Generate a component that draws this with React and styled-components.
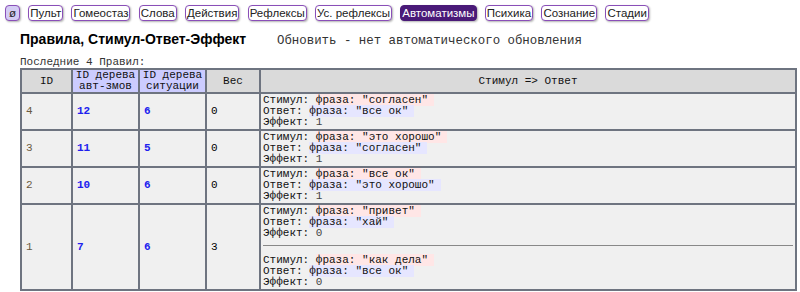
import React from "react";
import styled, { createGlobalStyle } from "styled-components";

const Global = createGlobalStyle`
  html, body { margin: 0; padding: 0; background: #fff; }
  body { font-family: "Liberation Sans", Arial, sans-serif; color: #000; }
`;

const Page = styled.div`
  padding: 4px 3px 0 5px;
`;

const Nav = styled.nav`
  display: flex;
  align-items: center;
  gap: 8.3px;
  height: 17px;
`;

const NavButton = styled.span`
  display: inline-block;
  font-family: "Liberation Sans", Arial, sans-serif;
  font-size: 11.5px;
  line-height: 14px;
  padding: ${(p) => (p.$light ? "0 3px" : "0 1px")};
  border: 1px solid ${(p) => (p.$active ? "#4a1a78" : "#8a4fb8")};
  border-radius: 4px;
  background: ${(p) => (p.$active ? "#4a1a78" : p.$light ? "#d4ccf4" : "#fff")};
  color: ${(p) => (p.$active ? "#fff" : "#222")};
  box-shadow: 1px 1px 2px rgba(0, 0, 0, 0.3);
`;

const Main = styled.div`
  padding-left: 15px;
`;

const TitleRow = styled.div`
  display: flex;
  align-items: baseline;
  margin-top: 10px;
  height: 22px;
`;

const Title = styled.h1`
  margin: 0;
  font-size: 14px;
  font-weight: bold;
  font-family: "Liberation Sans", Arial, sans-serif;
  width: 257px;
`;

const Refresh = styled.span`
  font-family: "Liberation Mono", "Courier New", monospace;
  font-size: 12.4px;
  color: #333;
`;

const Caption = styled.div`
  font-family: "Liberation Mono", "Courier New", monospace;
  font-size: 11px;
  line-height: 12px;
  color: #333;
  margin-top: 3px;
`;

const Table = styled.table`
  border-collapse: separate;
  border-spacing: 0;
  border: 1px solid #6e7480;
  width: 777px;
  font-family: "Liberation Mono", "Courier New", monospace;
  font-size: 11px;
  line-height: 11px;
`;

const Th = styled.th`
  border: 1px solid #6e7480;
  background: ${(p) => (p.$tree ? "#ccccff" : "#dadada")};
  color: #111;
  font-weight: normal;
  text-align: center;
  padding: 0 2px;
  height: 22px;
  width: ${(p) => p.$w}px;
`;

const Td = styled.td`
  border: 1px solid #6e7480;
  background: #f0f0f0;
  padding: 0 4px;
  vertical-align: middle;
  color: ${(p) => (p.$kind === "id" ? "#6a5a40" : p.$kind === "link" ? "#2020ee" : "#000")};
  font-weight: ${(p) => (p.$kind === "link" ? "bold" : "normal")};
`;

const RuleCell = styled.td`
  border: 1px solid #6e7480;
  background: #f0f0f0;
  padding: 1px 2px;
  vertical-align: top;
  color: #111;
`;

const Line = styled.div`
  white-space: pre;
  height: 11px;
`;

const Phrase = styled.span`
  background: ${(p) => (p.$resp ? "#e6e6ff" : "#ffe6e6")};
  padding-right: 6px;
`;

const Effect = styled.span`
  color: #444;
`;

const Sep = styled.hr`
  border: 0;
  border-top: 1px solid #888;
  margin: 6px 0 9px 0;
`;

const navItems = [
  "Пульт",
  "Гомеостаз",
  "Слова",
  "Действия",
  "Рефлексы",
  "Ус. рефлексы",
  "Автоматизмы",
  "Психика",
  "Сознание",
  "Стадии",
];

const rows = [
  { id: 4, a: 12, s: 6, w: 0, rules: [["согласен", "все ок", 1]] },
  { id: 3, a: 11, s: 5, w: 0, rules: [["это хорошо", "согласен", 1]] },
  { id: 2, a: 10, s: 6, w: 0, rules: [["все ок", "это хорошо", 1]] },
  {
    id: 1,
    a: 7,
    s: 6,
    w: 3,
    rules: [
      ["привет", "хай", 0],
      ["как дела", "все ок", 0],
    ],
  },
];

function Rule({ r }) {
  return (
    <div>
      <Line>
        Стимул: <Phrase>фраза: "{r[0]}"</Phrase>
      </Line>
      <Line>
        Ответ: <Phrase $resp>фраза: "{r[1]}"</Phrase>
      </Line>
      <Line>
        Эффект: <Effect>{r[2]}</Effect>
      </Line>
    </div>
  );
}

export default function App() {
  return (
    <>
      <Global />
      <Page>
        <Nav>
          <NavButton $light>ø</NavButton>
          {navItems.map((n) => (
            <NavButton key={n} $active={n === "Автоматизмы"}>
              {n}
            </NavButton>
          ))}
        </Nav>
        <Main>
          <TitleRow>
            <Title>Правила, Стимул-Ответ-Эффект</Title>
            <Refresh>Обновить - нет автоматического обновления</Refresh>
          </TitleRow>
          <Caption>Последние 4 Правил:</Caption>
          <Table>
            <thead>
              <tr>
                <Th $w={45}>ID</Th>
                <Th $w={61} $tree>
                  ID дерева
                  <br />
                  авт-змов
                </Th>
                <Th $w={61} $tree>
                  ID дерева
                  <br />
                  ситуации
                </Th>
                <Th $w={48}>Вес</Th>
                <Th>Стимул =&gt; Ответ</Th>
              </tr>
            </thead>
            <tbody>
              {rows.map((row) => (
                <tr key={row.id}>
                  <Td $kind="id">{row.id}</Td>
                  <Td $kind="link">{row.a}</Td>
                  <Td $kind="link">{row.s}</Td>
                  <Td>{row.w}</Td>
                  <RuleCell>
                    {row.rules.map((r, i) => (
                      <React.Fragment key={i}>
                        {i > 0 && <Sep />}
                        <Rule r={r} />
                      </React.Fragment>
                    ))}
                  </RuleCell>
                </tr>
              ))}
            </tbody>
          </Table>
        </Main>
      </Page>
    </>
  );
}
